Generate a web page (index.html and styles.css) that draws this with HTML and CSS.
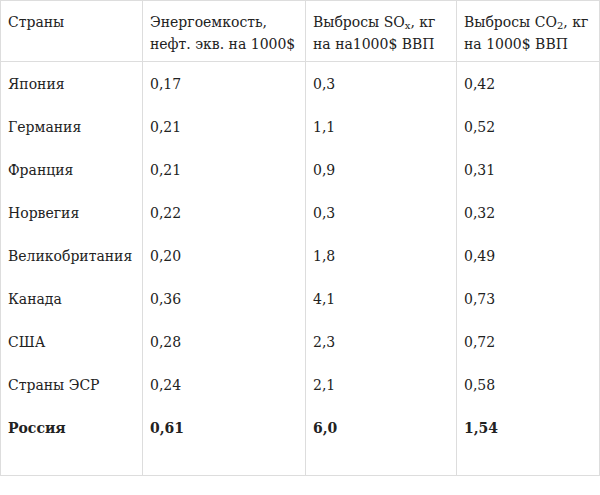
FILE: index.html
```html
<!DOCTYPE html>
<html lang="ru">
<head>
<meta charset="utf-8">
<link rel="stylesheet" href="styles.css">
</head>
<body>
<table class="data">
  <colgroup>
    <col class="c1"><col class="c2"><col class="c3"><col class="c4">
  </colgroup>
  <thead>
    <tr>
      <th>Страны</th>
      <th>Энергоемкость, нефт. экв. на 1000$</th>
      <th>Выбросы SO<sub>x</sub>, кг на на1000$ ВВП</th>
      <th>Выбросы CO<sub>2</sub>, кг на 1000$ ВВП</th>
    </tr>
  </thead>
  <tbody>
    <tr><td>Япония</td><td>0,17</td><td>0,3</td><td>0,42</td></tr>
    <tr><td>Германия</td><td>0,21</td><td>1,1</td><td>0,52</td></tr>
    <tr><td>Франция</td><td>0,21</td><td>0,9</td><td>0,31</td></tr>
    <tr><td>Норвегия</td><td>0,22</td><td>0,3</td><td>0,32</td></tr>
    <tr><td>Великобритания</td><td>0,20</td><td>1,8</td><td>0,49</td></tr>
    <tr><td>Канада</td><td>0,36</td><td>4,1</td><td>0,73</td></tr>
    <tr><td>США</td><td>0,28</td><td>2,3</td><td>0,72</td></tr>
    <tr><td>Страны ЭСР</td><td>0,24</td><td>2,1</td><td>0,58</td></tr>
    <tr class="total"><td>Россия</td><td>0,61</td><td>6,0</td><td>1,54</td></tr>
  </tbody>
</table>
</body>
</html>
```
FILE: styles.css
```css
html, body {
  margin: 0;
  padding: 0;
  background: #fff;
}
body {
  font-family: "DejaVu Serif", "Liberation Serif", serif;
  font-size: 14px;
  color: #222;
}
.data {
  border-collapse: collapse;
  table-layout: fixed;
  width: 599px;
  margin: 0;
  border: 1px solid #ddd;
}
.c1 { width: 142px; }
.c2 { width: 163px; }
.c3 { width: 151px; }
.c4 { width: 143px; }
.data th, .data td {
  text-align: left;
  vertical-align: top;
  font-weight: normal;
  border-left: 1px solid #ddd;
  border-right: 1px solid #ddd;
  padding: 11px 7px 9px;
  line-height: 23px;
}
.data th {
  padding: 10px 7px 6px;
  line-height: 22px;
  border-bottom: 1px solid #ddd;
}
.data sub {
  font-size: 10px;
  line-height: 1;
  vertical-align: -2px;
}
.total td {
  font-weight: bold;
  padding-bottom: 35px;
}
```
